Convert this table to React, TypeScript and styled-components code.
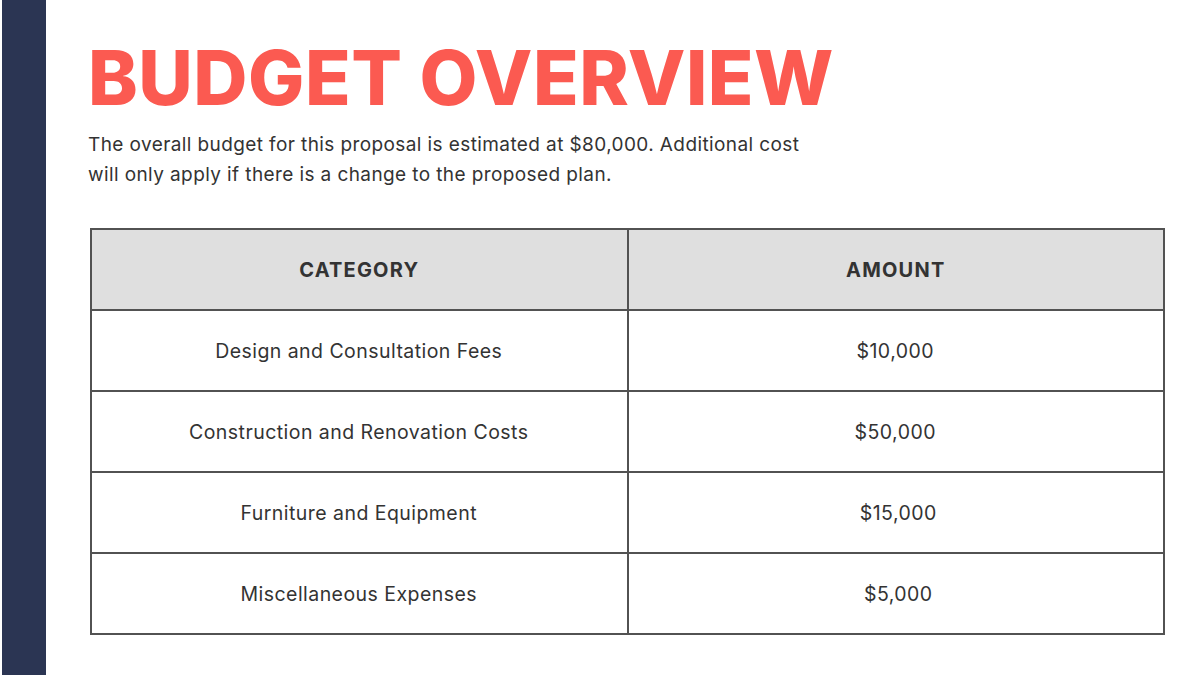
import styled, { createGlobalStyle } from 'styled-components'

const GlobalStyle = createGlobalStyle`
  html, body {
    margin: 0;
    padding: 0;
    background: #ffffff;
  }
  body {
    font-family: Inter, "Liberation Sans", sans-serif;
    color: #333333;
  }
`

const Slide = styled.div`
  width: 1200px;
  height: 675px;
  display: flex;
  overflow: hidden;
  background: #ffffff;
`

const SideBar = styled.div`
  width: 44px;
  margin-left: 2px;
  flex-shrink: 0;
  background: #2b3553;
`

const Content = styled.main`
  flex: 1;
  padding: 36px 0 0 42px;
  display: flex;
  flex-direction: column;
`

const Title = styled.h1`
  margin: 0;
  font-family: Inter, "Liberation Sans", sans-serif;
  font-weight: 800;
  font-size: 75px;
  line-height: 84px;
  letter-spacing: 0.5px;
  color: #fb5a51;
`

const Intro = styled.p`
  margin: 10px 0 0 0;
  width: 715px;
  font-size: 19px;
  line-height: 30px;
  letter-spacing: 0.4px;
  color: #333333;
`

const Table = styled.table`
  margin: 38px 0 0 2px;
  width: 1075px;
  border-collapse: collapse;
  table-layout: fixed;
`

const HeadCell = styled.th`
  height: 77px;
  background: #dfdfdf;
  border: 2px solid #525252;
  font-size: 20px;
  font-weight: 700;
  letter-spacing: 1.2px;
  color: #333333;
  text-align: center;
`

const Cell = styled.td<{ $shift?: number }>`
  height: 77px;
  border: 2px solid #525252;
  font-size: 19.5px;
  font-weight: 400;
  letter-spacing: 0.45px;
  color: #333333;
  text-align: center;
  padding-left: ${props => props.$shift ?? 0}px;
`

const rows = [
  { category: 'Design and Consultation Fees', amount: '$10,000', shift: 0 },
  { category: 'Construction and Renovation Costs', amount: '$50,000', shift: 0 },
  { category: 'Furniture and Equipment', amount: '$15,000', shift: 6 },
  { category: 'Miscellaneous Expenses', amount: '$5,000', shift: 6 },
]

const App = () => {
  return (
    <>
      <GlobalStyle />
      <Slide>
        <SideBar />
        <Content>
          <Title>BUDGET OVERVIEW</Title>
          <Intro>
            The overall budget for this proposal is estimated at $80,000. Additional cost will only apply if there is a change to the proposed plan.
          </Intro>
          <Table>
            <thead>
              <tr>
                <HeadCell>CATEGORY</HeadCell>
                <HeadCell>AMOUNT</HeadCell>
              </tr>
            </thead>
            <tbody>
              {rows.map(row => (
                <tr key={row.category}>
                  <Cell>{row.category}</Cell>
                  <Cell $shift={row.shift}>{row.amount}</Cell>
                </tr>
              ))}
            </tbody>
          </Table>
        </Content>
      </Slide>
    </>
  )
}

export default App
